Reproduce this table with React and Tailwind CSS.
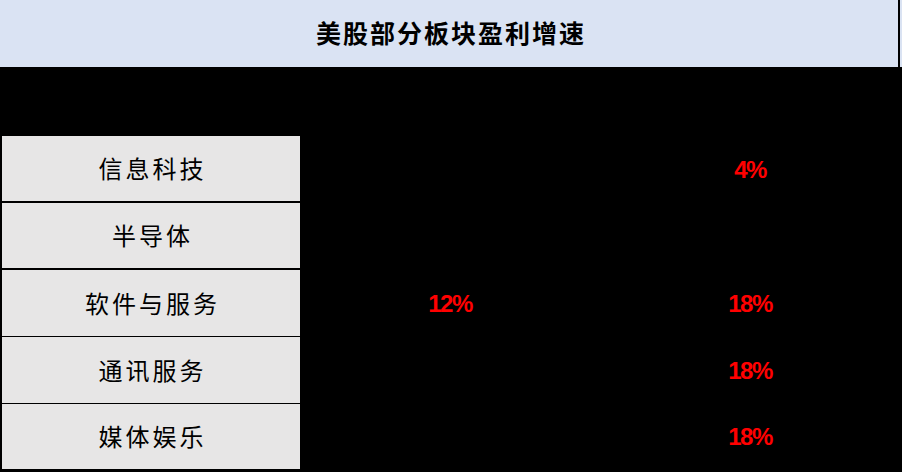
const rows = [
  { name: "信息科技", a: "", b: "4%", h: "h-[67px]", border: "border-b-2" },
  { name: "半导体", a: "", b: "", h: "h-[67px]", border: "border-b-2" },
  { name: "软件与服务", a: "12%", b: "18%", h: "h-[67px]", border: "border-b" },
  { name: "通讯服务", a: "", b: "18%", h: "h-[67px]", border: "border-b" },
  { name: "媒体娱乐", a: "", b: "18%", h: "h-[65px]", border: "" },
];

function App() {
  return (
    <div className="w-[902px] h-[472px] bg-black overflow-hidden font-['Noto_Sans_CJK_SC',sans-serif]">
      <div className="flex h-[67px]">
        <div className="flex-1 bg-[#dae3f3] flex items-center justify-center">
          <span className="text-[25px] font-bold text-black tracking-[2px] pl-[4px] pb-[2px]">
            美股部分板块盈利增速
          </span>
        </div>
        <div className="w-[2px] bg-black" />
        <div className="w-[2px] bg-[#dae3f3]" />
      </div>

      <div className="h-[69px]" />

      <div className="flex flex-col pl-[2px]">
        {rows.map((row, i) => (
          <div key={i} className={"flex " + row.h}>
            <div
              className={
                "w-[298px] bg-[#e7e6e6] border-black flex items-center justify-center " +
                row.border
              }
            >
              <span className="text-[24px] text-black tracking-[3px] pl-[3px] leading-none pb-[1px]">
                {row.name}
              </span>
            </div>
            <div className="w-[300px] flex items-center justify-center">
              <span className="font-['Liberation_Sans',sans-serif] text-[24px] font-bold text-[#ff0000] tracking-[-1.5px] leading-none">
                {row.a}
              </span>
            </div>
            <div className="w-[300px] flex items-center justify-center">
              <span className="font-['Liberation_Sans',sans-serif] text-[24px] font-bold text-[#ff0000] tracking-[-1.5px] leading-none">
                {row.b}
              </span>
            </div>
          </div>
        ))}
      </div>
    </div>
  );
}

export default App;
